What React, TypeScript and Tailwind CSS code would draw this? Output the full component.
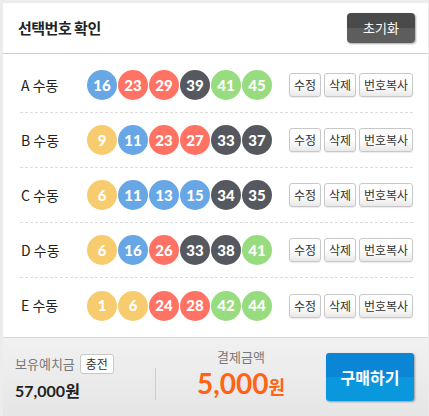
import React from "react";

const rows: { label: string; nums: number[] }[] = [
  { label: "A 수동", nums: [16, 23, 29, 39, 41, 45] },
  { label: "B 수동", nums: [9, 11, 23, 27, 33, 37] },
  { label: "C 수동", nums: [6, 11, 13, 15, 34, 35] },
  { label: "D 수동", nums: [6, 16, 26, 33, 38, 41] },
  { label: "E 수동", nums: [1, 6, 24, 28, 42, 44] },
];

function ballClass(n: number) {
  if (n <= 10) return "bg-[#f6cc6e]";
  if (n <= 20) return "bg-[#68a7e6]";
  if (n <= 30) return "bg-[#ff7264]";
  if (n <= 40) return "bg-[#55595f]";
  return "bg-[#97dc7e]";
}

function SmallBtn({ children, w }: { children: React.ReactNode; w: string }) {
  return (
    <div
      className={`${w} h-[24px] flex items-center justify-center rounded-[3px] border border-[#c8c8c8] bg-gradient-to-b from-white from-50% to-[#e9e9e9] text-[12px] text-[#333] shadow-[0_1px_1px_rgba(0,0,0,0.08)]`}
    >
      {children}
    </div>
  );
}

export default function App() {
  return (
    <div
      className="w-[429px] h-[416px] bg-[#ececec] pt-[3px] pl-[3px] pr-[1px] overflow-hidden"
      style={{ fontFamily: '"Noto Sans CJK KR", "Noto Sans", sans-serif' }}
    >
      <div className="bg-white h-full flex flex-col">
        {/* header */}
        <div className="h-[51px] flex items-center justify-between pl-[15px] pr-[13px] border-b border-[#cfcfcf] shrink-0">
          <div className="text-[15px] font-bold text-[#222] tracking-[-0.5px]">선택번호 확인</div>
          <div className="w-[68px] h-[30px] rounded-[4px] bg-gradient-to-b from-[#4a4a4a] from-50% to-[#5d5d5d] to-50% flex items-center justify-center text-white text-[13px] shadow-[1px_1px_2px_rgba(0,0,0,0.35)]">
            초기화
          </div>
        </div>
        {/* list */}
        <div className="flex-1 pt-[4px] pl-[17px] pr-[15px]">
          {rows.map((r, i) => (
            <div
              key={r.label}
              className={`h-[55px] flex items-center ${i < rows.length - 1 ? "border-b border-dashed border-[#dcdcdc]" : ""}`}
            >
              <div className="w-[67px] pl-[1px] text-[14px] text-[#222]">{r.label}</div>
              <div className="flex gap-[1px]">
                {r.nums.map((n) => (
                  <div
                    key={n}
                    className={`w-[30px] h-[30px] rounded-full ${ballClass(n)} flex items-center justify-center text-white text-[15px] font-black`}
                    style={{ fontFamily: 'Lato, "Noto Sans", sans-serif' }}
                  >
                    {n}
                  </div>
                ))}
              </div>
              <div className="ml-auto flex gap-[3px]">
                <SmallBtn w="w-[32px]">수정</SmallBtn>
                <SmallBtn w="w-[32px]">삭제</SmallBtn>
                <SmallBtn w="w-[54px]">번호복사</SmallBtn>
              </div>
            </div>
          ))}
        </div>
        {/* footer */}
        <div className="h-[79px] shrink-0 border-t border-[#d8d8d8] bg-gradient-to-b from-[#f1f1f1] to-[#e6e6e6] flex items-center pl-[12px] pr-[14px]">
          <div className="w-[140px] flex flex-col">
            <div className="flex items-center gap-[5px] h-[20px]">
              <span className="text-[13px] text-[#777]">보유예치금</span>
              <span className="h-[20px] px-[5px] flex items-center bg-white border border-[#c8c8c8] rounded-[3px] text-[12px] text-[#333]">
                충전
              </span>
            </div>
            <div className="mt-[7px] text-[16px] font-bold text-[#222] leading-[20px]" style={{ fontFamily: 'Lato, "Noto Sans CJK KR", sans-serif' }}>
              57,000원
            </div>
          </div>
          <div className="w-px h-[32px] bg-[#cfcfcf] mt-[14px]" />
          <div className="flex-1 flex flex-col items-center mb-[4px]">
            <div className="text-[13px] text-[#777] leading-[19px]">결제금액</div>
            <div className="flex items-baseline text-[#ff6414] font-bold leading-[34px]">
              <span className="text-[28px]" style={{ fontFamily: 'Lato, "Noto Sans", sans-serif' }}>5,000</span>
              <span className="text-[18px]">원</span>
            </div>
          </div>
          <div className="w-[88px] h-[48px] rounded-[3px] bg-gradient-to-b from-[#0b86d6] from-50% to-[#0997de] to-50% flex items-center justify-center text-white text-[16px] font-bold shadow-[1px_1px_2px_rgba(0,0,0,0.35)]">
            구매하기
          </div>
        </div>
      </div>
    </div>
  );
}
